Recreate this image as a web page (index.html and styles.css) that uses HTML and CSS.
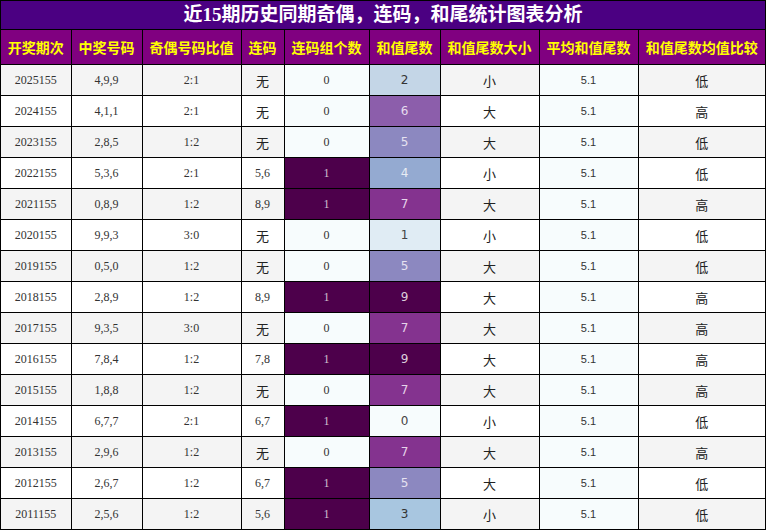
FILE: index.html
```html
<!DOCTYPE html>
<html>
<head>
<meta charset="utf-8">
<link rel="stylesheet" href="styles.css">
</head>
<body>
<div class="wrap">
<div class="title">近15期历史同期奇偶，连码，和尾统计图表分析</div>
<table class="tbl">
<colgroup>
<col class="c1"><col class="c2"><col class="c3"><col class="c4"><col class="c5"><col class="c6"><col class="c7"><col class="c8"><col>
</colgroup>
<thead>
<tr><th>开奖期次</th><th>中奖号码</th><th>奇偶号码比值</th><th>连码</th><th>连码组个数</th><th>和值尾数</th><th>和值尾数大小</th><th>平均和值尾数</th><th>和值尾数均值比较</th></tr>
</thead>
<tbody>
<tr><td>2025155</td><td>4,9,9</td><td>2:1</td><td class="cj">无</td><td class="z0">0</td><td class="s t2">2</td><td class="cj">小</td><td class="avg">5.1</td><td class="cj">低</td></tr>
<tr><td>2024155</td><td>4,1,1</td><td>2:1</td><td class="cj">无</td><td class="z0">0</td><td class="s t6">6</td><td class="cj">大</td><td class="avg">5.1</td><td class="cj">高</td></tr>
<tr><td>2023155</td><td>2,8,5</td><td>1:2</td><td class="cj">无</td><td class="z0">0</td><td class="s t5">5</td><td class="cj">大</td><td class="avg">5.1</td><td class="cj">低</td></tr>
<tr><td>2022155</td><td>5,3,6</td><td>2:1</td><td>5,6</td><td class="z1">1</td><td class="s t4">4</td><td class="cj">小</td><td class="avg">5.1</td><td class="cj">低</td></tr>
<tr><td>2021155</td><td>0,8,9</td><td>1:2</td><td>8,9</td><td class="z1">1</td><td class="s t7">7</td><td class="cj">大</td><td class="avg">5.1</td><td class="cj">高</td></tr>
<tr><td>2020155</td><td>9,9,3</td><td>3:0</td><td class="cj">无</td><td class="z0">0</td><td class="s t1">1</td><td class="cj">小</td><td class="avg">5.1</td><td class="cj">低</td></tr>
<tr><td>2019155</td><td>0,5,0</td><td>1:2</td><td class="cj">无</td><td class="z0">0</td><td class="s t5">5</td><td class="cj">大</td><td class="avg">5.1</td><td class="cj">低</td></tr>
<tr><td>2018155</td><td>2,8,9</td><td>1:2</td><td>8,9</td><td class="z1">1</td><td class="s t9">9</td><td class="cj">大</td><td class="avg">5.1</td><td class="cj">高</td></tr>
<tr><td>2017155</td><td>9,3,5</td><td>3:0</td><td class="cj">无</td><td class="z0">0</td><td class="s t7">7</td><td class="cj">大</td><td class="avg">5.1</td><td class="cj">高</td></tr>
<tr><td>2016155</td><td>7,8,4</td><td>1:2</td><td>7,8</td><td class="z1">1</td><td class="s t9">9</td><td class="cj">大</td><td class="avg">5.1</td><td class="cj">高</td></tr>
<tr><td>2015155</td><td>1,8,8</td><td>1:2</td><td class="cj">无</td><td class="z0">0</td><td class="s t7">7</td><td class="cj">大</td><td class="avg">5.1</td><td class="cj">高</td></tr>
<tr><td>2014155</td><td>6,7,7</td><td>2:1</td><td>6,7</td><td class="z1">1</td><td class="s t0">0</td><td class="cj">小</td><td class="avg">5.1</td><td class="cj">低</td></tr>
<tr><td>2013155</td><td>2,9,6</td><td>1:2</td><td class="cj">无</td><td class="z0">0</td><td class="s t7">7</td><td class="cj">大</td><td class="avg">5.1</td><td class="cj">高</td></tr>
<tr><td>2012155</td><td>2,6,7</td><td>1:2</td><td>6,7</td><td class="z1">1</td><td class="s t5">5</td><td class="cj">大</td><td class="avg">5.1</td><td class="cj">低</td></tr>
<tr><td>2011155</td><td>2,5,6</td><td>1:2</td><td>5,6</td><td class="z1">1</td><td class="s t3">3</td><td class="cj">小</td><td class="avg">5.1</td><td class="cj">低</td></tr>
</tbody>
</table>
</div>
</body>
</html>
```
FILE: styles.css
```css
html, body {
  margin: 0;
  padding: 0;
  background: #ffffff;
}
.wrap {
  width: 766px;
  height: 530px;
  box-sizing: border-box;
  border: 1px solid #000;
  overflow: hidden;
}
.title {
  height: 28px;
  line-height: 28px;
  background: #4b0082;
  color: #ffffff;
  text-align: center;
  font-family: "Liberation Serif", "Noto Sans CJK SC", sans-serif;
  font-weight: bold;
  font-size: 19px;
  border-bottom: 1px solid #000;
}
.tbl {
  width: 764px;
  border-collapse: collapse;
  table-layout: fixed;
}
.c1 { width: 70px; }
.c2 { width: 71px; }
.c3 { width: 99px; }
.c4 { width: 43px; }
.c5 { width: 85px; }
.c6 { width: 71px; }
.c7 { width: 99px; }
.c8 { width: 99px; }
.tbl th {
  height: 34px;
  padding: 0;
  background: #800080;
  color: #ffff00;
  font-family: "Noto Sans CJK SC", sans-serif;
  font-weight: bold;
  font-size: 14px;
  text-align: center;
  border: 1px solid #000;
  border-top: none;
  white-space: nowrap;
}
.tbl tr th:first-child, .tbl tr td:first-child { border-left: none; }
.tbl tr th:last-child, .tbl tr td:last-child { border-right: none; }
.tbl td {
  height: 30px;
  padding: 0;
  text-align: center;
  border: 1px solid #000;
  font-family: "Liberation Serif", serif;
  font-size: 12px;
  color: #333;
}
.tbl tbody tr:last-child td { border-bottom: none; }
.tbl tbody tr:nth-child(odd) td { background: #f4f4f4; }
.tbl tbody tr:nth-child(even) td { background: #ffffff; }
.tbl td.cj {
  font-family: "Noto Sans CJK SC", sans-serif;
  font-size: 13px;
  color: #222;
}
.tbl td.s {
  font-family: "DejaVu Sans", sans-serif;
  font-size: 12px;
}
.tbl td.avg {
  font-family: "Liberation Sans", sans-serif;
  font-size: 11px;
}
.tbl tbody tr td.avg { background: #f7fcfd; }
.tbl tbody tr td.z0 { background: #f7fcfd; }
.tbl tbody tr td.z1 { background: #4d004b; color: #cfc0d0; }
.tbl tbody tr td.t0 { background: #f7fcfd; color: #444; }
.tbl tbody tr td.t1 { background: #e0ecf4; color: #444; }
.tbl tbody tr td.t2 { background: #c4d6e7; color: #333; }
.tbl tbody tr td.t3 { background: #a8c6e0; color: #333; }
.tbl tbody tr td.t4 { background: #94aad1; color: #e8ecf4; }
.tbl tbody tr td.t5 { background: #8c88c0; color: #e6e2f0; }
.tbl tbody tr td.t6 { background: #8c5eab; color: #e6dcee; }
.tbl tbody tr td.t7 { background: #84338f; color: #e6d4ea; }
.tbl tbody tr td.t9 { background: #4d004b; color: #dccedc; }
```
